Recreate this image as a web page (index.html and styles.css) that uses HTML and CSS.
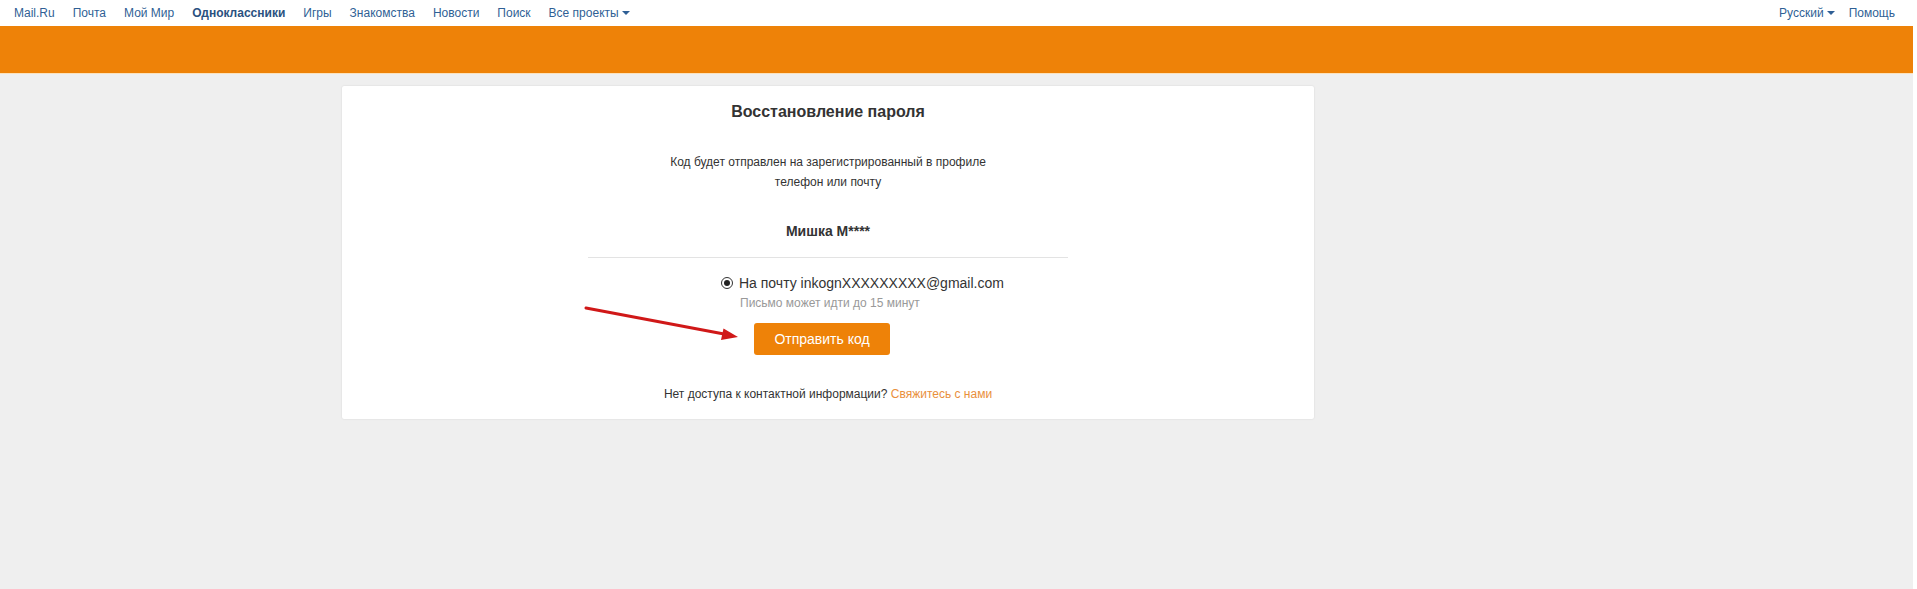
FILE: index.html
```html
<!DOCTYPE html>
<html lang="ru">
<head>
<meta charset="utf-8">
<title>Восстановление пароля</title>
<link rel="stylesheet" href="styles.css">
</head>
<body>
<div class="page">
  <div class="topbar">
    <nav class="nav-left">
      <a href="#">Mail.Ru</a>
      <a href="#">Почта</a>
      <a href="#">Мой Мир</a>
      <a href="#" class="active">Одноклассники</a>
      <a href="#">Игры</a>
      <a href="#">Знакомства</a>
      <a href="#">Новости</a>
      <a href="#">Поиск</a>
      <a href="#" class="drop">Все проекты<span class="caret"></span></a>
    </nav>
    <nav class="nav-right">
      <a href="#" class="drop">Русский<span class="caret"></span></a>
      <a href="#">Помощь</a>
    </nav>
  </div>
  <div class="orange"></div>
  <main class="main">
    <section class="card">
      <div class="inner">
        <h1 class="title">Восстановление пароля</h1>
        <p class="desc">Код будет отправлен на зарегистрированный в профиле<br>телефон или почту</p>
        <div class="name">Мишка М****</div>
        <div class="divider"></div>
        <label class="radio-row"><span class="radio"></span>На почту inkognXXXXXXXXX@gmail.com</label>
        <div class="hint">Письмо может идти до 15 минут</div>
        <button class="btn">Отправить код</button>
        <p class="help">Нет доступа к контактной информации? <a href="#">Свяжитесь с нами</a></p>
      </div>
      <svg class="arrow" width="170" height="50" viewBox="0 0 170 50">
        <line x1="4" y1="7" x2="142" y2="33" stroke="#d01818" stroke-width="3" stroke-linecap="round"/>
        <polygon points="156,36 139,39 141.5,27.5" fill="#d01818"/>
      </svg>
    </section>
  </main>
</div>
</body>
</html>
```

FILE: styles.css
```css
* { box-sizing: border-box; }
html, body { margin: 0; padding: 0; background: #fff; }
body { font-family: "Liberation Sans", Arial, sans-serif; color: #333; }
.page {
  margin-right: 4px;
  min-height: 100vh;
  background: #efefef;
}
.topbar {
  height: 26px;
  background: #fff;
  display: flex;
  justify-content: space-between;
  align-items: center;
  padding: 0 18px 0 14px;
  font-size: 12px;
}
.topbar nav { display: flex; gap: 18px; }
.topbar a { color: #2f5f95; text-decoration: none; line-height: 24px; }
.topbar a.active { font-weight: bold; color: #2a5180; }
.caret {
  display: inline-block;
  width: 0; height: 0;
  border-left: 4px solid transparent;
  border-right: 4px solid transparent;
  border-top: 4px solid #2f5f95;
  margin-left: 3px;
  vertical-align: 2px;
}
.nav-right { gap: 14px !important; }
.orange {
  height: 48px;
  background: #ee8208;
  border-bottom: 1px solid #fbe2bd;
}
.main { padding: 12px 0 0 342px; }
.card {
  position: relative;
  width: 972px;
  background: #fff;
  border-radius: 2px;
  box-shadow: 0 0 2px rgba(0,0,0,0.12);
  padding: 16px 0 17px;
}
.inner { width: 480px; margin: 0 auto; }
.title {
  margin: 0;
  text-align: center;
  font-size: 16px;
  line-height: 20px;
  font-weight: bold;
  color: #333;
}
.desc {
  margin: 30px 0 0;
  text-align: center;
  font-size: 12px;
  line-height: 20px;
  color: #333;
}
.name {
  margin-top: 29px;
  text-align: center;
  font-weight: bold;
  font-size: 14px;
  line-height: 20px;
  color: #333;
}
.divider { margin-top: 16px; height: 1px; background: #e3e3e3; }
.radio-row {
  display: flex;
  align-items: center;
  margin: 15px 0 0 133px;
  font-size: 14px;
  line-height: 20px;
  color: #333;
}
.radio {
  width: 12px; height: 12px;
  border: 1px solid #333;
  border-radius: 50%;
  margin-right: 6px;
  display: flex;
  align-items: center;
  justify-content: center;
}
.radio::after {
  content: "";
  width: 6px; height: 6px;
  border-radius: 50%;
  background: #222;
}
.hint {
  margin: 2px 0 0 152px;
  font-size: 12px;
  line-height: 16px;
  color: #999;
}
.btn {
  display: block;
  margin: 12px 0 0 166px;
  width: 136px;
  height: 32px;
  border: 0;
  border-radius: 3px;
  background: #ee8208;
  color: #fff;
  font-family: inherit;
  font-size: 14px;
  padding: 0;
}
.help {
  margin: 31px 0 0;
  text-align: center;
  font-size: 12px;
  line-height: 16px;
  color: #333;
}
.help a { color: #e98f3c; text-decoration: none; }
.arrow { position: absolute; left: 240px; top: 215px; }
```
